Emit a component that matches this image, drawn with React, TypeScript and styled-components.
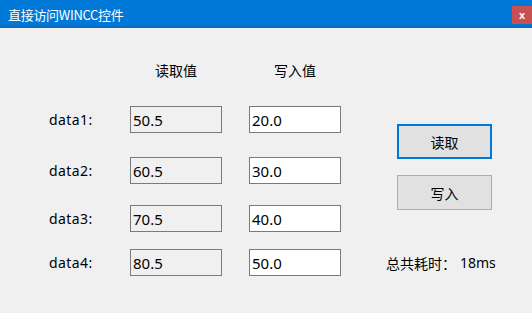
import styled, { createGlobalStyle } from 'styled-components';

const GlobalStyle = createGlobalStyle`
  html, body {
    margin: 0;
    padding: 0;
    background: #f0f0f0;
  }
  body {
    font-family: "Noto Sans", "Noto Sans CJK SC", sans-serif;
  }
`;

const rows = [
  { label: 'data1:', read: '50.5', write: '20.0', gap: 26 },
  { label: 'data2:', read: '60.5', write: '30.0', gap: 24 },
  { label: 'data3:', read: '70.5', write: '40.0', gap: 21 },
  { label: 'data4:', read: '80.5', write: '50.0', gap: 17 },
];

export default function App() {
  return (
    <>
      <GlobalStyle />
      <StyledWindow>
        <TitleBar>
          <span className="title">直接访问WINCC控件</span>
          <CloseButton>x</CloseButton>
        </TitleBar>
        <Body>
          <DataTable>
            <HeaderRow>
              <span />
              <span className="head">读取值</span>
              <span className="head">写入值</span>
            </HeaderRow>
            {rows.map((r) => (
              <DataRow key={r.label} $gap={r.gap}>
                <Label>{r.label}</Label>
                <ValueBox $readonly>{r.read}</ValueBox>
                <ValueBox>{r.write}</ValueBox>
              </DataRow>
            ))}
          </DataTable>
          <SidePanel>
            <ActionButton $focused>读取</ActionButton>
            <ActionButton>写入</ActionButton>
            <TimeInfo>
              <span>总共耗时：</span>
              <span>18ms</span>
            </TimeInfo>
          </SidePanel>
        </Body>
      </StyledWindow>
    </>
  );
}

const StyledWindow = styled.div`
  width: 532px;
  height: 313px;
  background: #f0f0f0;
  display: flex;
  flex-direction: column;
  overflow: hidden;
`;

const TitleBar = styled.div`
  height: 25px;
  background: #0078d7;
  border-bottom: 3px solid #0a6cc2;
  display: flex;
  align-items: center;
  justify-content: space-between;
  padding-left: 8px;
  .title {
    color: #ffffff;
    font-family: "Noto Sans CJK SC", sans-serif;
    font-size: 13px;
    margin-top: 3px;
    letter-spacing: -0.3px;
  }
`;

const CloseButton = styled.div`
  width: 20px;
  height: 18px;
  margin-top: 5px;
  background: #c75050;
  color: #ffffff;
  font-family: "Liberation Sans", sans-serif;
  font-size: 11px;
  font-weight: bold;
  display: flex;
  align-items: center;
  justify-content: center;
`;

const Body = styled.div`
  flex: 1;
  display: flex;
`;

const DataTable = styled.div`
  display: flex;
  flex-direction: column;
  padding: 32px 0 0 49px;
`;

const HeaderRow = styled.div`
  display: grid;
  grid-template-columns: 54px 92px 92px;
  column-gap: 27px;
  height: 20px;
  align-items: center;
  .head {
    text-align: center;
    font-family: "Noto Sans CJK SC", sans-serif;
    font-size: 14px;
    color: #000;
  }
`;

const DataRow = styled.div<{ $gap: number }>`
  display: grid;
  grid-template-columns: 54px 92px 92px;
  column-gap: 27px;
  align-items: center;
  margin-top: ${(p) => p.$gap}px;
`;

const Label = styled.span`
  font-size: 14px;
  letter-spacing: 0.4px;
  color: #000;
`;

const ValueBox = styled.div<{ $readonly?: boolean }>`
  box-sizing: border-box;
  height: 27px;
  border: 1px solid #7a7a7a;
  background: ${(p) => (p.$readonly ? '#f0f0f0' : '#ffffff')};
  display: flex;
  align-items: center;
  padding-left: 2px;
  font-size: 15px;
  color: #000;
`;

const SidePanel = styled.div`
  display: flex;
  flex-direction: column;
  align-items: flex-start;
  padding: 96px 0 0 45px;
`;

const ActionButton = styled.div<{ $focused?: boolean }>`
  box-sizing: border-box;
  width: 95px;
  height: 35px;
  margin-left: 11px;
  margin-bottom: 16px;
  background: #e1e1e1;
  border: ${(p) => (p.$focused ? '2px solid #0078d7' : '1px solid #adadad')};
  display: flex;
  align-items: center;
  justify-content: center;
  font-family: "Noto Sans CJK SC", sans-serif;
  font-size: 14px;
  color: #000;
`;

const TimeInfo = styled.div`
  display: flex;
  gap: 4px;
  margin-top: 27px;
  font-family: "Noto Sans", "Noto Sans CJK SC", sans-serif;
  font-size: 14px;
  color: #000;
`;
